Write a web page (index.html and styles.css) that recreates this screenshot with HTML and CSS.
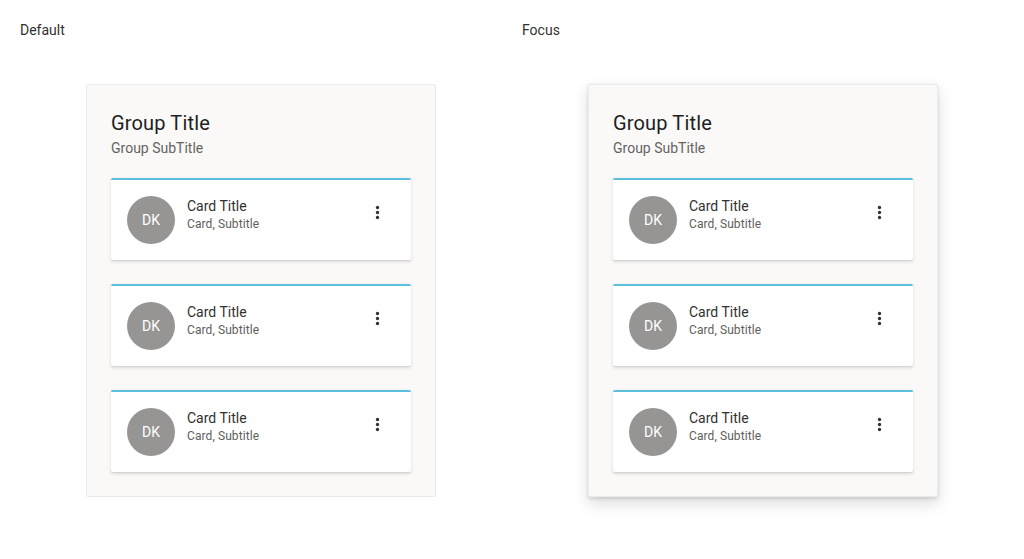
FILE: index.html
```html
<!DOCTYPE html>
<html lang="en">
<head>
<meta charset="utf-8">
<title>Card group</title>
<link rel="stylesheet" href="styles.css">
</head>
<body>
<main class="states">
<section class="state">
<h1 class="state-label">Default</h1>
<div class="group">
<h2 class="group-title">Group Title</h2>
<p class="group-subtitle">Group SubTitle</p>
<div class="cards">
<article class="card"><div class="avatar">DK</div><div class="card-text"><h3 class="card-title">Card Title</h3><p class="card-subtitle">Card, Subtitle</p></div><svg class="more" viewBox="0 0 16 16"><circle cx="8.5" cy="3.5" r="1.65"/><circle cx="8.5" cy="8.5" r="1.65"/><circle cx="8.5" cy="13.5" r="1.65"/></svg></article>
<article class="card"><div class="avatar">DK</div><div class="card-text"><h3 class="card-title">Card Title</h3><p class="card-subtitle">Card, Subtitle</p></div><svg class="more" viewBox="0 0 16 16"><circle cx="8.5" cy="3.5" r="1.65"/><circle cx="8.5" cy="8.5" r="1.65"/><circle cx="8.5" cy="13.5" r="1.65"/></svg></article>
<article class="card"><div class="avatar">DK</div><div class="card-text"><h3 class="card-title">Card Title</h3><p class="card-subtitle">Card, Subtitle</p></div><svg class="more" viewBox="0 0 16 16"><circle cx="8.5" cy="3.5" r="1.65"/><circle cx="8.5" cy="8.5" r="1.65"/><circle cx="8.5" cy="13.5" r="1.65"/></svg></article>
</div>
</div>
</section>
<section class="state">
<h1 class="state-label">Focus</h1>
<div class="group group-focus">
<h2 class="group-title">Group Title</h2>
<p class="group-subtitle">Group SubTitle</p>
<div class="cards">
<article class="card"><div class="avatar">DK</div><div class="card-text"><h3 class="card-title">Card Title</h3><p class="card-subtitle">Card, Subtitle</p></div><svg class="more" viewBox="0 0 16 16"><circle cx="8.5" cy="3.5" r="1.65"/><circle cx="8.5" cy="8.5" r="1.65"/><circle cx="8.5" cy="13.5" r="1.65"/></svg></article>
<article class="card"><div class="avatar">DK</div><div class="card-text"><h3 class="card-title">Card Title</h3><p class="card-subtitle">Card, Subtitle</p></div><svg class="more" viewBox="0 0 16 16"><circle cx="8.5" cy="3.5" r="1.65"/><circle cx="8.5" cy="8.5" r="1.65"/><circle cx="8.5" cy="13.5" r="1.65"/></svg></article>
<article class="card"><div class="avatar">DK</div><div class="card-text"><h3 class="card-title">Card Title</h3><p class="card-subtitle">Card, Subtitle</p></div><svg class="more" viewBox="0 0 16 16"><circle cx="8.5" cy="3.5" r="1.65"/><circle cx="8.5" cy="8.5" r="1.65"/><circle cx="8.5" cy="13.5" r="1.65"/></svg></article>
</div>
</div>
</section>
</main>
</body>
</html>
```
FILE: styles.css
```css
* { box-sizing: border-box; }
body { margin: 0; background: #fff; color: #323130; font-family: Roboto, sans-serif; }
h1, h2, h3, p { margin: 0; font-weight: 400; }
.states { display: grid; grid-template-columns: 502px 502px; align-content: start; min-height: 559px; padding: 20px 0 0 20px; }
.state-label { font-size: 14px; line-height: 20px; }
.group { width: 350px; height: 413px; margin: 44px 0 0 66px; padding: 24px; background: #faf9f8; border: 1px solid #edebe9; border-radius: 2px; }
.group-focus { box-shadow: 0 6.4px 14.4px rgba(0,0,0,.132), 0 1.2px 3.6px rgba(0,0,0,.108); }
.group-title { font-size: 20px; line-height: 28px; letter-spacing: .15px; color: #201f1e; }
.group-subtitle { margin-top: 1px; font-size: 14px; line-height: 20px; color: #666462; }
.cards { display: grid; gap: 24px; margin-top: 20px; }
.card { display: flex; height: 82px; padding: 16px; background: #fff; border-top: 2px solid #5bc0de; border-radius: 2px; box-shadow: 0 1.6px 3.6px rgba(0,0,0,.12), 0 .3px .9px rgba(0,0,0,.06); }
.avatar { width: 48px; height: 48px; border-radius: 50%; background: #979593; color: #fff; font-size: 14px; line-height: 48px; text-align: center; }
.card-text { flex: 1; margin-left: 12px; }
.card-title { font-size: 14px; line-height: 20px; }
.card-subtitle { font-size: 12px; line-height: 16px; letter-spacing: .09px; color: #605e5c; }
.more { width: 16px; height: 16px; margin: 8px 10px 0 0; fill: #323130; }
```
